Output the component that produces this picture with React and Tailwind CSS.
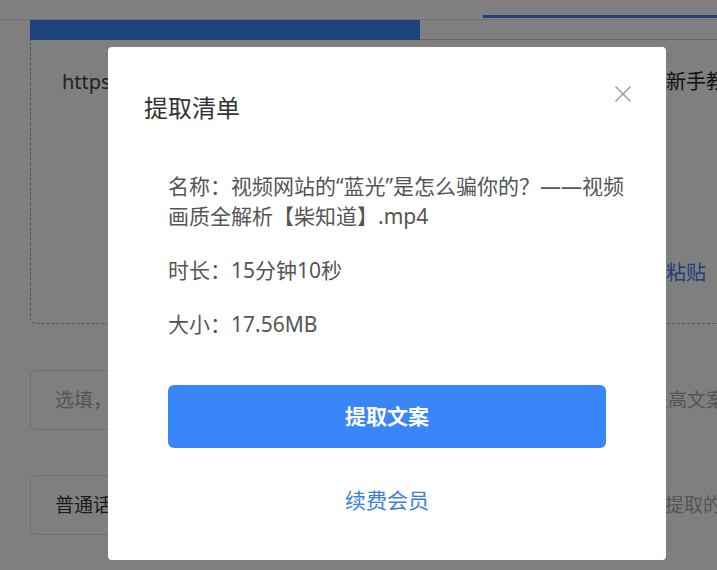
import React from "react";

const font = "font-['Noto_Sans','Noto_Sans_CJK_SC',sans-serif]";

export default function App() {
  return (
    <div className={`relative w-[717px] h-[570px] overflow-hidden bg-white ${font}`}>
      {/* Page behind the dialog */}
      <div className="w-[800px]">
        {/* Tabs */}
        <div className="mt-[15px] ml-[483px] h-[3px] bg-[#3c84f8]" />
        <div className="mt-px h-px bg-[#e6e6e6]" />
        <div className="flex h-5 pl-[30px]">
          <div className="w-[390px] bg-[#3c84f8]" />
          <div className="flex-1 border-b border-[#c8c8c8]" />
        </div>

        {/* Link box */}
        <div className="ml-[30px] w-[760px] h-[284px] flex border border-t-0 border-dashed border-[#aaa] rounded-b-md pl-[31px] pt-[28px] pb-[36px]">
          <div className="w-[604px] text-[20px] leading-7 text-[#444] truncate">
            https://www.bilibili.com/video/BV1xx411c7mD
          </div>
          <div className="flex flex-col justify-between text-[20px] leading-7">
            <span className="text-[#222]">新手教程</span>
            <span className="text-[#3b7ff0]">粘贴</span>
          </div>
        </div>

        {/* Title input */}
        <div className="mt-[46px] flex items-center">
          <div className="ml-[30px] w-[560px] h-[60px] flex items-center pl-6 border border-[#ddd] rounded-md text-[19px] text-[#aaa]">
            选填，输入视频标题
          </div>
          <span className="ml-[59px] text-[19px] text-[#aaa] whitespace-nowrap">提高文案准确率</span>
        </div>

        {/* Language select */}
        <div className="mt-[45px] flex items-center">
          <div className="ml-[30px] w-[560px] h-[60px] flex items-center pl-6 border border-[#ddd] rounded-md text-[19px] text-[#333]">
            普通话
          </div>
          <span className="ml-[75px] text-[19px] text-[#aaa] whitespace-nowrap">提取的语言类型</span>
        </div>
      </div>

      {/* Overlay */}
      <div className="absolute inset-0 bg-black/50" />

      {/* Dialog */}
      <div className="absolute left-[108px] top-[47px] w-[558px] h-[513px] bg-white rounded pt-[45px]">
        <button className="absolute right-[35px] top-[39px] text-[#999]">
          <svg width="16" height="16" viewBox="0 0 16 16" fill="none" stroke="currentColor" strokeWidth="1.4">
            <line x1="0.5" y1="0.5" x2="15.5" y2="15.5" />
            <line x1="15.5" y1="0.5" x2="0.5" y2="15.5" />
          </svg>
        </button>

        <h2 className="pl-9 text-[24px] leading-8 text-[#333]">提取清单</h2>

        <div className="mt-[47px] pl-[60px] w-[532px] text-[21px] leading-[30px] text-[#555] space-y-6">
          <p>名称：视频网站的“蓝光”是怎么骗你的？——视频画质全解析【柴知道】.mp4</p>
          <p>时长：15分钟10秒</p>
          <p>大小：17.56MB</p>
        </div>

        <div className="mt-[46px] px-[60px]">
          <button className="w-full h-[63px] rounded-md bg-[#3886f8] text-white text-[21px] font-semibold">
            提取文案
          </button>
          <div className="mt-[37px] text-center text-[21px] leading-[30px] text-[#3b80dc]">续费会员</div>
        </div>
      </div>
    </div>
  );
}
